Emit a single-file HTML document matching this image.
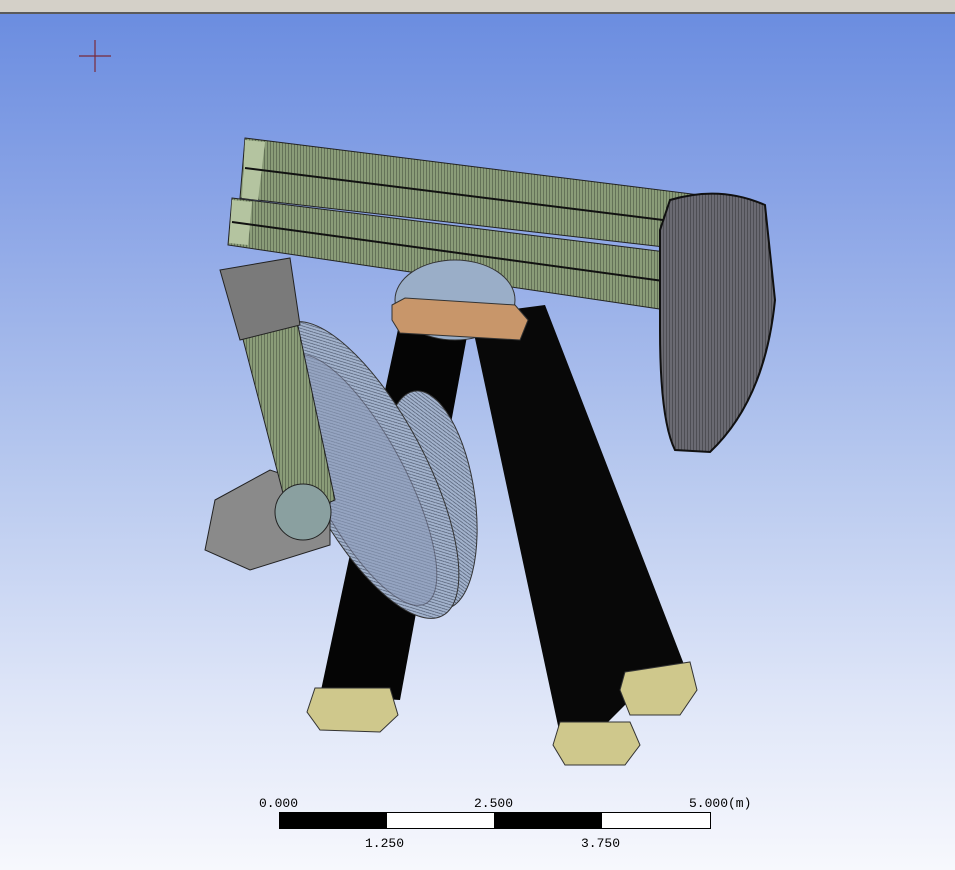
<!DOCTYPE html>
<html><head><style>
html,body{margin:0;padding:0;width:955px;height:870px;overflow:hidden;}
body{background:linear-gradient(to bottom,#6b8de0 13px,#8aa4e6 200px,#b4c6ee 450px,#dfe6f8 700px,#f7f8fd 870px);font-family:"Liberation Mono","Noto Sans CJK SC",monospace;position:relative;}
.top{position:absolute;left:0;top:0;width:955px;height:12px;background:#d4d0c8;border-bottom:2px solid #5a5a5a;}
.lbl{position:absolute;font-size:13px;color:#000;}
</style></head><body>
<div class="top"></div>
<svg width="955" height="870" style="position:absolute;left:0;top:0">
<defs>
<pattern id="hv" width="3" height="3" patternUnits="userSpaceOnUse"><rect width="3" height="3" fill="#8a9c78"/><line x1="0" y1="0" x2="0" y2="3" stroke="#2a3326" stroke-width="0.8"/></pattern>
<pattern id="hb" width="4" height="4" patternUnits="userSpaceOnUse"><rect width="4" height="4" fill="#a2b2cc"/><path d="M0,0 L4,4" stroke="#3a4458" stroke-width="0.6"/></pattern>
<pattern id="hg" width="3" height="3" patternUnits="userSpaceOnUse"><rect width="3" height="3" fill="#6a6a72"/><line x1="0" y1="0" x2="0" y2="3" stroke="#1a1a1a" stroke-width="0.7"/></pattern>
</defs>
<g stroke="#7a2a3a" stroke-width="1.2"><line x1="79" y1="56" x2="111" y2="56"/><line x1="95" y1="40" x2="95" y2="72"/></g>
<polygon points="400,320 470,320 400,700 320,695" fill="#050505"/>
<polygon points="470,315 545,305 690,680 630,700 600,730 560,735" fill="#080808"/>
<polygon points="315,688 390,688 398,715 380,732 320,730 307,712" fill="#cfc88c" stroke="#333"/>
<polygon points="560,722 630,722 640,745 625,765 565,765 553,745" fill="#cfc88c" stroke="#333"/>
<polygon points="625,672 690,662 697,690 680,715 630,715 620,690" fill="#cfc88c" stroke="#333"/>
<ellipse cx="430" cy="500" rx="45" ry="110" transform="rotate(-8 430 500)" fill="url(#hb)" stroke="#333"/>
<ellipse cx="365" cy="470" rx="60" ry="165" transform="rotate(-28 365 470)" fill="url(#hb)" stroke="#333"/>
<ellipse cx="360" cy="480" rx="45" ry="140" transform="rotate(-28 360 480)" fill="#8d9cba" opacity="0.6" stroke="#445"/>
<polygon points="215,500 270,470 330,490 330,545 250,570 205,550" fill="#8a8a8a" stroke="#222"/>
<polygon points="225,270 285,265 335,500 290,520" fill="url(#hv)" stroke="#222"/>
<polygon points="220,270 290,258 300,325 240,340" fill="#7a7a7a" stroke="#222"/>
<circle cx="303" cy="512" r="28" fill="#8aa0a0" stroke="#222"/>
<polygon points="245,138 700,195 690,250 240,198" fill="url(#hv)" stroke="#222"/>
<polygon points="232,198 690,255 680,312 228,245" fill="url(#hv)" stroke="#222"/>
<polygon points="245,140 265,142 258,200 242,198" fill="#b4c4a0"/>
<polygon points="232,200 252,202 248,245 229,243" fill="#b4c4a0"/>
<g stroke="#111" stroke-width="2"><line x1="245" y1="168" x2="695" y2="224"/><line x1="232" y1="222" x2="685" y2="284"/></g>
<ellipse cx="455" cy="300" rx="60" ry="40" fill="#9aaec8" stroke="#333"/>
<polygon points="392,305 405,298 515,305 528,320 520,340 400,333 392,320" fill="#c8966a" stroke="#333"/>
<path d="M670,200 Q720,185 765,205 L775,300 Q765,400 710,452 L675,450 Q660,420 660,330 L660,230 Z" fill="url(#hg)" stroke="#111" stroke-width="2"/>
<rect x="279.5" y="812.5" width="431" height="16" fill="#fff" stroke="#000"/>
<rect x="279" y="812" width="108" height="17" fill="#000"/>
<rect x="494" y="812" width="108" height="17" fill="#000"/>
</svg>
<div class="lbl" style="left:259px;top:796px">0.000</div>
<div class="lbl" style="left:474px;top:796px">2.500</div>
<div class="lbl" style="left:689px;top:796px">5.000(m)</div>
<div class="lbl" style="left:365px;top:836px">1.250</div>
<div class="lbl" style="left:581px;top:836px">3.750</div>
</body></html>
